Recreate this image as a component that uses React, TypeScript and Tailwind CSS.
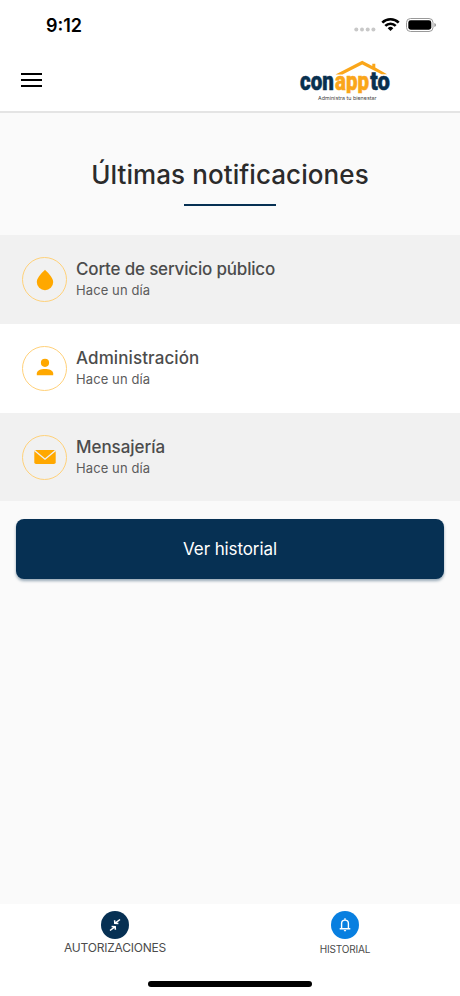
import type { ReactNode } from 'react';

type Notification = {
  id: number;
  title: string;
  time: string;
  tracking: string;
  icon: ReactNode;
};

const notifications: Notification[] = [
  {
    id: 1,
    title: 'Corte de servicio público',
    time: 'Hace un día',
    tracking: 'tracking-[-0.18px]',
    icon: <DropIcon />,
  },
  {
    id: 2,
    title: 'Administración',
    time: 'Hace un día',
    tracking: 'tracking-[0.1px]',
    icon: <PersonIcon />,
  },
  {
    id: 3,
    title: 'Mensajería',
    time: 'Hace un día',
    tracking: 'tracking-[-0.05px]',
    icon: <MailIcon />,
  },
];

function DropIcon() {
  return (
    <svg width="18" height="22" viewBox="0 0 18 22" fill="#ffa800">
      <path d="M9 .8C8 2 .8 8.200 .8 13a8.200 8.200 0 0 0 16.400 0C17.200 8.200 10 2 9 .8z" />
    </svg>
  );
}

function PersonIcon() {
  return (
    <svg width="18" height="18" viewBox="0 0 18 18" fill="#ffa800" className="mb-[3px]">
      <circle cx="9" cy="4.800" r="4.100" />
      <path d="M.8 17.200v-1.700C.8 12.400 5 11 9 11s8.200 1.400 8.200 4.500v1.700z" />
    </svg>
  );
}

function MailIcon() {
  return (
    <svg width="22" height="16" viewBox="0 0 22 16">
      <rect x=".3" y="1" width="21.400" height="14" rx="1.800" fill="#ffa800" />
      <path d="M.5 1.500 11 10.200 21.500 1.500" fill="none" stroke="#f1f1f1" strokeWidth="1.400" />
    </svg>
  );
}

function StatusBar() {
  return (
    <div className="flex h-[52px] items-center justify-between pl-[46px] pr-[23px]">
      <span className="text-[18px] leading-none font-semibold text-black">9:12</span>
      <svg width="84" height="18" viewBox="0 0 84 18" className="mb-[2px]">
        <g fill="#c8c8c8">
          <circle cx="3.300" cy="13.500" r="2" />
          <circle cx="9" cy="13.500" r="2" />
          <circle cx="14.700" cy="13.500" r="2" />
          <circle cx="20.400" cy="13.500" r="2" />
        </g>
        <g fill="none" stroke="#000" strokeWidth="2.600">
          <path d="M29.300 6.600a11.600 11.600 0 0 1 16.400 0" />
          <path d="M32.300 9.900a7.300 7.300 0 0 1 10.400 0" />
        </g>
        <path d="M34.700 12.200a4 4 0 0 1 5.600 0l-2.800 2.900z" fill="#000" />
        <rect x="53.500" y="2.500" width="26.500" height="13" rx="4" fill="none" stroke="#999" />
        <rect x="55.300" y="4.300" width="23" height="9.400" rx="2.400" fill="#000" />
        <path d="M81.300 7v4c1.300-.5 1.700-1 1.700-2s-.4-1.500-1.700-2z" fill="#999" />
      </svg>
    </div>
  );
}

function Logo() {
  return (
    <svg width="96" height="46" viewBox="297 58 96 46">
      <path
        d="M335.500 74.500 362.200 60.700l10.100 5.200v-2.100h3v3.700l11.700 6.700h-5.500l-19.300-9.800-19.700 10.100z"
        fill="#faa61a"
      />
      <clipPath id="wordmark">
        <path d="M297 70h96v23.200h-96z" />
      </clipPath>
      <g
        clipPath="url(#wordmark)"
        fontFamily="Roboto, sans-serif"
        fontSize="25"
        fontWeight="900"
        strokeWidth=".5"
      >
        <text x="300" y="89.800" textLength="33.800" lengthAdjust="spacingAndGlyphs" fill="#08304f" stroke="#08304f">
          con
        </text>
        <text x="335" y="89.800" textLength="34" lengthAdjust="spacingAndGlyphs" fill="#faa61a" stroke="#faa61a">
          app
        </text>
        <text x="370.200" y="89.800" textLength="19.600" lengthAdjust="spacingAndGlyphs" fill="#08304f" stroke="#08304f">
          to
        </text>
      </g>
      <text
        x="318"
        y="100"
        textLength="58.500"
        lengthAdjust="spacingAndGlyphs"
        fontFamily="Inter, sans-serif"
        fontSize="5"
        fill="#444"
      >
        Administra tu bienestar
      </text>
    </svg>
  );
}

function Header() {
  return (
    <header className="h-[113px] border-b-2 border-[#e4e4e4] bg-white">
      <StatusBar />
      <div className="flex items-start justify-between pl-[21px] pr-[67px] pt-[6px]">
        <button aria-label="Menú" className="mt-[15px] flex w-[21px] flex-col gap-1">
          <span className="h-[2px] bg-black" />
          <span className="h-[2px] bg-black" />
          <span className="h-[2px] bg-black" />
        </button>
        <Logo />
      </div>
    </header>
  );
}

function App() {
  return (
    <div className="flex h-[996px] w-full flex-col bg-[#fafafa] font-['Inter',sans-serif]">
      <Header />

      <main className="flex-1">
        <div className="flex h-[121.750px] flex-col items-center pt-[44px]">
          <h1 className="text-[26px] leading-9 font-medium tracking-[0.08px] whitespace-nowrap text-[#2b2b2b]">
            Últimas notificaciones
          </h1>
          <div className="mt-[11px] h-[2px] w-[92px] bg-[#063053]" />
        </div>

        <ul>
          {notifications.map(item => (
            <li
              key={item.id}
              className="flex h-[88.900px] items-center gap-[9px] pt-px pl-[22px] odd:bg-[#f1f1f1] even:bg-white"
            >
              <div className="flex size-[45px] items-center justify-center rounded-full border border-[#ffd17a]">
                {item.icon}
              </div>
              <div className="mb-[3px]">
                <p className={`text-[17px] leading-6 font-medium text-[#4c4c4c] ${item.tracking}`}>
                  {item.title}
                </p>
                <p className="text-[13px] leading-[18px] tracking-[0.1px] text-[#5c5c5c]">{item.time}</p>
              </div>
            </li>
          ))}
        </ul>

        <div className="px-4 pt-[17.550px]">
          <button className="h-[60px] w-full rounded-lg bg-[#063053] pt-px text-[17px] tracking-[-0.1px] text-white shadow-[0_2px_3px_rgba(6,48,83,0.4)]">
            Ver historial
          </button>
        </div>
      </main>

      <nav className="flex h-[92px] flex-col bg-white">
        <div className="grid flex-1 grid-cols-2 pt-[7px]">
          <div className="flex flex-col items-center">
            <div className="flex size-7 items-center justify-center rounded-full bg-[#063053]">
              <svg width="12" height="14" viewBox="0 0 12 14" fill="none" stroke="#fff" strokeWidth="1.500">
                <path d="M11 1.500 6.500 4.800M5.600 2.300l.2 3.100 3.600.2M1 12.500l4.500-3.300M6.400 11.700l-.2-3.100-3.600-.2" />
              </svg>
            </div>
            <span className="text-[12px] leading-[18px] tracking-[-0.22px] text-[#4c4c4c]">AUTORIZACIONES</span>
          </div>
          <div className="flex flex-col items-center">
            <div className="flex size-7 items-center justify-center rounded-full bg-[#087fe0]">
              <svg width="12" height="14" viewBox="0 0 12 14" fill="none" stroke="#fff" strokeWidth="1.400">
                <path d="M2.600 10.500V5.500a3.400 3.400 0 0 1 6.800 0v5M.7 10.800h10.600M6 .2v2" />
                <path d="M4.600 12h2.800L6 13.700z" fill="#fff" stroke="none" />
              </svg>
            </div>
            <span className="mt-px text-[10px] leading-[18px] tracking-[-0.15px] text-[#4c4c4c]">HISTORIAL</span>
          </div>
        </div>
        <div className="mx-auto mb-[9px] h-[6px] w-[164px] rounded-full bg-black" />
      </nav>
    </div>
  );
}

export default App;
